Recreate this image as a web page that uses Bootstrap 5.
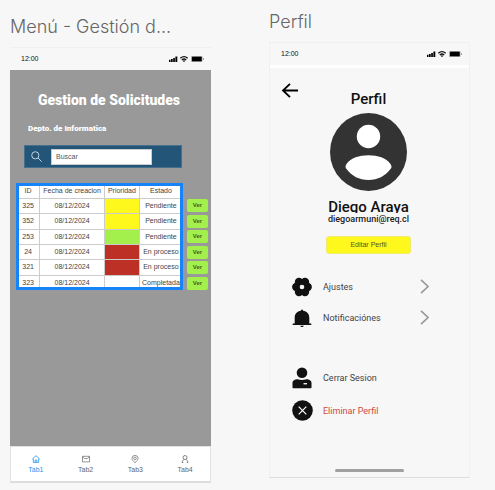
<!DOCTYPE html>
<html lang="es">
<head>
<meta charset="utf-8">
<meta name="viewport" content="width=device-width, initial-scale=1">
<title>Gestión de Solicitudes</title>
<link href="https://cdn.jsdelivr.net/npm/bootstrap@5.3.0/dist/css/bootstrap.min.css" rel="stylesheet">
<style>
body{background:#f7f7f7;font-family:Roboto,"Liberation Sans",sans-serif;color:#111;font-size:9px;line-height:12px}
svg{display:block;flex:none}
.board{display:grid;grid-template-columns:1fr 1fr;column-gap:58px;padding:10px 25px 7px 10px}
.screen-left{padding-top:5px}
.screen-right{padding-bottom:4px}
.frame-name{font:300 18px/24px Inter,sans-serif;color:#666;margin:0 0 8px}
.phone{border:1px solid #f0f0f0;border-bottom-color:#ddd;background:#f7f7f7;min-height:436px}
.status{height:22px;padding:0 7px 0 11px;font:500 7px/22px "Liberation Sans",sans-serif;color:#111}
.left-phone{border-width:1px 0 2px}
.panel{background:#999;padding:20px 3px 0 6px}
.panel h1{font-size:14px;line-height:20px;font-weight:900;color:#fff;margin:0 6px 13px 0}
.panel h2{font-size:8px;line-height:12px;font-weight:900;color:#fff;margin:0 0 10px 12px}
.finder{background:#235578;border:1px solid #44708e;height:23px;margin:0 26px 15px 8px;padding:0 29px 0 6px;gap:9px}
.finder input{font:7px/14px "Liberation Sans",sans-serif;border:1px solid #ccc;height:16px;padding:0 4px;color:#555;background:#fff}
.finder input::placeholder{color:#555;opacity:1}
.table-wrap{height:107px;overflow:hidden;outline:3px solid #1683f8;outline-offset:-3px;background:#fff}
.requests{height:108px;table-layout:fixed;width:100%;border-collapse:collapse;font:7px/8px "Liberation Sans",sans-serif;color:#444;text-align:center}
.requests th{font-weight:400;height:15px}
.requests th,.requests td{padding:0;border:1px solid #ccc;white-space:nowrap}
.requests .high{background:#bd3026}
.requests .mid{background:#fff81c}
.requests .low{background:#a3f04d}
.views{padding-top:16px;height:107px;flex:none;width:21px}
.views button{background:#a3f04d;border:0;border-radius:2px;height:13px;padding:0;font:700 6px/13px "Liberation Sans",sans-serif;color:#43601f}
.tabs{background:#fff;border:1px solid #e2e2e2;border-width:1px 1px 0;height:35px}
.tabs a{font:7px/8px "Liberation Sans",sans-serif;color:#666;gap:3px}
.tabs a.active{color:#2693ee}
.strip{height:3px;background:#fff}
.profile{padding:15px 0 0 11px}
.back{width:18px;height:15px}
.who{margin-right:13px}
.who h1{font-size:15px;line-height:16px;font-weight:500;margin:-7px 0 6px}
.who h2{font-size:15px;line-height:16px;font-weight:500;margin:8px 0 0;height:14px;overflow:hidden}
.who p{font-size:9px;line-height:10px;font-weight:500;color:#222;margin:1px 0 12px}
.edit{background:#fff81c;border:1px solid #f1ea70;border-radius:3px;width:85px;height:18px;padding:0;font:7px/16px "Liberation Sans",sans-serif;color:#555620}
.options{margin:17px 40px 0 11px}
.options a{height:31px;color:#444;gap:11px}
.options .session{margin-top:29px}
.options .delete{height:35px;color:#cf4a40;gap:10px}
.homebar{width:69px;height:3px;border-radius:2px;background:#a0a0a0;margin-bottom:5px}
</style>
<script src="https://cdn.jsdelivr.net/npm/bootstrap@5.3.0/dist/js/bootstrap.bundle.min.js"></script>
</head>
<body>
<svg width="0" height="0" class="position-absolute" aria-hidden="true">
<symbol id="signals" viewBox="0 0 36 8"><path d="M1 4.800h1.500V7H1zM3 4h1.700v3H3zM5.200 3h1.700v4H5.200zM7.400 1.500h1.900V7H7.400z"/><path d="M12.300 3.200q3.700-3.200 7.400 0M13.800 4.900q2.200-1.800 4.400 0" fill="none" stroke="#111" stroke-width="1.300"/><path d="M14.700 5.500h2.600L16 7.300z"/><rect x="23" y="1" width="11.500" height="6" rx="1" fill="#aaa"/><rect x="24" y="1.800" width="9.700" height="4.400" rx=".5"/><path d="M35 3.200h1v1.700h-1z" fill="#999"/></symbol>
</svg>
<main class="board">
<section class="screen-left">
<p class="frame-name text-nowrap">Menú - Gestión d...</p>
<div class="phone left-phone d-flex flex-column">
<div class="status d-flex justify-content-between align-items-center"><span>12:00</span><svg width="36" height="8"><use href="#signals"/></svg></div>
<div class="panel flex-grow-1">
<h1 class="text-center">Gestion de Solicitudes</h1>
<h2>Depto. de Informatica</h2>
<form class="finder d-flex align-items-center" role="search">
<svg width="11" height="11" viewBox="0 0 11 11" fill="none" stroke="#d4e0e8" stroke-width=".9"><circle cx="4.300" cy="4.300" r="3.600"/><path d="M7 7l3.700 3.700"/></svg>
<input class="flex-grow-1 w-100" type="search" placeholder="Buscar" aria-label="Buscar">
</form>
<div class="d-flex gap-1">
<div class="table-wrap flex-grow-1">
<table class="requests">
<colgroup><col style="width:14%"><col style="width:39%"><col style="width:21%"><col style="width:26%"></colgroup>
<thead><tr><th>ID</th><th>Fecha de creacion</th><th>Prioridad</th><th>Estado</th></tr></thead>
<tbody>
<tr><td>325</td><td>08/12/2024</td><td class="mid"></td><td>Pendiente</td></tr>
<tr><td>352</td><td>08/12/2024</td><td class="mid"></td><td>Pendiente</td></tr>
<tr><td>253</td><td>08/12/2024</td><td class="low"></td><td>Pendiente</td></tr>
<tr><td>24</td><td>08/12/2024</td><td class="high"></td><td>En proceso</td></tr>
<tr><td>321</td><td>08/12/2024</td><td class="high"></td><td>En proceso</td></tr>
<tr><td>323</td><td>08/12/2024</td><td></td><td>Completada</td></tr>
</tbody>
</table>
</div>
<div class="views d-flex flex-column justify-content-between">
<button type="button">Ver</button><button type="button">Ver</button><button type="button">Ver</button><button type="button">Ver</button><button type="button">Ver</button><button type="button">Ver</button>
</div>
</div>
</div>
<nav class="tabs row row-cols-4 g-0 align-items-center">
<a href="#" class="active col d-flex flex-column align-items-center text-decoration-none"><svg width="8" height="8" viewBox="0 0 8 8" fill="none" stroke="currentColor" stroke-width=".8"><path d="M.4 4L4 .7 7.600 4M1.300 3.500v3.900h5.400V3.500M3.200 7.400V5h1.600v2.400"/></svg>Tab1</a>
<a href="#" class="col d-flex flex-column align-items-center text-decoration-none"><svg width="8" height="8" viewBox="0 0 8 8" fill="none" stroke="currentColor" stroke-width=".7"><path d="M.5 1.300h7v5.600h-7zM.5 1.600L2.500 3.500h3l2-1.900"/></svg>Tab2</a>
<a href="#" class="col d-flex flex-column align-items-center text-decoration-none"><svg width="8" height="8" viewBox="0 0 8 8" fill="none" stroke="currentColor" stroke-width=".7"><path d="M4 7.600C2.300 6.300 1 5 1 3.400a3 3 0 016 0C7 5 5.700 6.300 4 7.600z"/><circle cx="4" cy="3.400" r="1.300"/></svg>Tab3</a>
<a href="#" class="col d-flex flex-column align-items-center text-decoration-none"><svg width="8" height="8" viewBox="0 0 8 8" fill="none" stroke="currentColor" stroke-width=".8"><circle cx="4" cy="2.500" r="2"/><path d="M1.200 7.600c0-2 1-2.700 1.900-3.200M6.800 7.600c0-2-1-2.700-1.900-3.200M1 7.500h1.200M5.800 7.500H7"/></svg>Tab4</a>
</nav>
</div>
</section>
<section class="screen-right">
<p class="frame-name">Perfil</p>
<div class="phone d-flex flex-column">
<div class="status d-flex justify-content-between align-items-center"><span>12:00</span><svg width="36" height="8"><use href="#signals"/></svg></div>
<div class="strip"></div>
<div class="profile flex-grow-1">
<a href="#" class="back d-block" aria-label="Volver"><svg width="18" height="15" viewBox="0 0 18 15" fill="none" stroke="#000" stroke-width="1.800"><path d="M9 .8L2 7.500l7 6.700M2 7.500h15"/></svg></a>
<div class="who d-flex flex-column align-items-center">
<h1>Perfil</h1>
<svg width="77" height="78" viewBox="0 0 77 78"><ellipse cx="38.500" cy="39" rx="38.500" ry="39" fill="#333"/><circle cx="38.500" cy="23.500" r="11.700" fill="#fff"/><path d="M16.500 51C21 45 29 42.300 38.500 42.300S56 45 60.500 51Q62.500 54 60.500 56C55 63 48 67 38.500 67S22 63 16.500 56Q14.500 54 16.500 51z" fill="#fff"/></svg>
<h2>Diego Araya</h2>
<p>diegoarmuni@req.cl</p>
<button type="button" class="edit">Editar Perfil</button>
</div>
<nav class="options d-flex flex-column">
<a href="#" class="d-flex align-items-center text-decoration-none"><svg width="20" height="20" viewBox="0 0 20 20"><g fill="#111"><circle cx="10" cy="10" r="7.500"/><circle cx="4.300" cy="10" r="4.200"/><circle cx="15.700" cy="10" r="4.200"/><circle cx="7" cy="5" r="4.200"/><circle cx="13" cy="5" r="4.200"/><circle cx="7" cy="15" r="4.200"/><circle cx="13" cy="15" r="4.200"/></g><circle cx="10" cy="10" r="2.300" fill="#f7f7f7"/></svg><span class="flex-grow-1">Ajustes</span><svg width="9" height="15" viewBox="0 0 9 15" fill="none" stroke="#999" stroke-width="1.600"><path d="M1 .8l7 6.700-7 6.700"/></svg></a>
<a href="#" class="d-flex align-items-center text-decoration-none"><svg width="20" height="20" viewBox="0 0 20 20" fill="#111"><path d="M9 2.800V1.800h2v1c4 .5 6.300 3.200 6.300 7V15.500h2V17H.7v-1.500h2V9.800c0-3.800 2.300-6.500 6.300-7zM8 17.700h4L10.800 19H9.200z"/></svg><span class="flex-grow-1">Notificaciónes</span><svg width="9" height="15" viewBox="0 0 9 15" fill="none" stroke="#999" stroke-width="1.600"><path d="M1 .8l7 6.700-7 6.700"/></svg></a>
<a href="#" class="session d-flex align-items-center text-decoration-none"><svg width="20" height="22" viewBox="0 0 20 22"><circle cx="10" cy="5.700" r="5.300" fill="#111"/><path d="M.5 20.500v-4.500C.5 13.500 3 12.300 5.500 12.300q4.500 1.200 9 0c2.500 0 5 1.200 5 3.700v4.500q0 .8-.8.800H1.300q-.8 0-.8-.8z" fill="#111"/><path d="M11.500 16h3.500v1.400h-3.500z" fill="#eee"/></svg><span>Cerrar Sesion</span></a>
<a href="#" class="delete d-flex align-items-center text-decoration-none"><svg width="21" height="21" viewBox="0 0 21 21"><circle cx="10.500" cy="10.500" r="10.300" fill="#111"/><path d="M6.700 6.700l7.600 7.600M14.300 6.700l-7.600 7.600" stroke="#fff" stroke-width="1.200"/></svg><span>Eliminar Perfil</span></a>
</nav>
</div>
<div class="homebar align-self-center"></div>
</div>
</section>
</main>
</body>
</html>
